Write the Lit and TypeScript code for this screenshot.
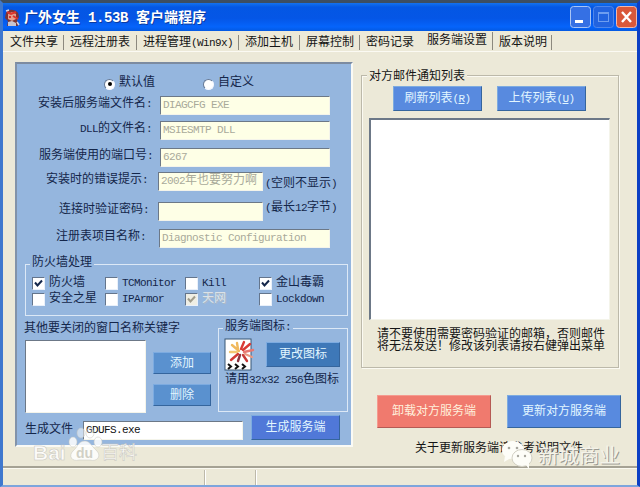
import { LitElement, html, css, svg } from "lit";
import { customElement } from "lit/decorators.js";
import { classMap } from "lit/directives/class-map.js";
import { styleMap } from "lit/directives/style-map.js";

/* Half-width characters take half the advance of a full-width one. */
const mixed = (s: string) =>
  s.split(/([\x20-\x7e]+)/).filter(Boolean).map((p) =>
    /^[\x20-\x7e]/.test(p) ? html`<span class="a">${p}</span>` : p);

const tabs = [
  { t: "文件共享", w: 60 },
  { t: "远程注册表", w: 73 },
  { t: "进程管理(Win9x)", w: 102 },
  { t: "添加主机", w: 61 },
  { t: "屏幕控制", w: 60 },
  { t: "密码记录", w: 61, quiet: true },
  { t: "服务端设置", w: 72, on: true },
  { t: "版本说明", w: 59 },
];

const rows = [
  { label: "安装后服务端文件名:", v: "DIAGCFG EXE", end: 135, gap: 11, w: 170, h: 25 },
  { label: "DLL的文件名:", v: "MSIESMTP DLL", end: 135, gap: 11, w: 170, h: 27 },
  { label: "服务端使用的端口号:", v: "6267", end: 136, gap: 10, w: 170, h: 24 },
  { label: "安装时的错误提示:", v: "2002年也要努力啊", end: 131, gap: 13, w: 105, hint: "(空则不显示)", hd: 3, h: 30 },
  { label: "连接时验证密码:", v: "", end: 132, gap: 12, w: 105, hint: "(最长12字节)", hd: -3, h: 27 },
  { label: "注册表项目名称:", v: "Diagnostic Configuration", end: 129, gap: 16, w: 171, h: 20 },
];

const checks = [
  { t: "防火墙", on: true }, { t: "TCMonitor" }, { t: "Kill" }, { t: "金山毒霸", on: true },
  { t: "安全之星" }, { t: "IPArmor" }, { t: "天网", on: true, off: true }, { t: "Lockdown" },
];

const burst = svg`
  <rect width="26" height="31" fill="#fff" stroke="#385674"/>
  <g stroke-width="2.4" stroke-linecap="round" fill="none">
    <path d="M14 12L7 6M13 10L12 4" stroke="#f0b95e"/>
    <path d="M16 10L19 3M18 11L25 5" stroke="#d93a35"/>
    <path d="M12 13L5 13" stroke="#f3c872"/>
    <path d="M19 13L28 11" stroke="#e87872"/>
    <path d="M13 15L6 21" stroke="#d03a34"/>
    <path d="M15 16L13 22" stroke="#8e3540"/>
    <path d="M18 16L22 22" stroke="#c83836"/>
    <path d="M20 15L27 18" stroke="#eb9a84"/>
  </g>
  <path d="M3 25l3 2.5-3 2.5M10 25l3 2.5-3 2.5M17 25l3 2.5-3 2.5" stroke="#111" stroke-width="2" fill="none"/>`;

@customElement("app-root")
export class AppRoot extends LitElement {
  static styles = css`
    :host { display: block; width: 640px; height: 487px; }
    * { box-sizing: border-box; }
    .win {
      position: relative; height: 487px; overflow: hidden; background: #ece9d8;
      border: solid; border-width: 3px 3px 2px 3px;
      border-color: #3d4e61 #0c3fc4 #7da5dc #3f78ce;
      font: 12px/14px "Liberation Mono", "Noto Sans CJK SC", sans-serif;
      color: #151515; white-space: nowrap; display: flex; flex-direction: column;
    }
    .a { font-family: "Liberation Mono", monospace; font-size: 11px; letter-spacing: -0.6px; white-space: pre; }
    .bar {
      height: 28px; margin: 0 -3px; padding: 0 3px 0 4px; display: flex; align-items: center; flex: none;
      background: linear-gradient(#1472ee 0, #0457e4 15%, #0556e6 55%, #0564fb 85%, #0359e2 100%);
      color: #fff; font-size: 14px; font-weight: 700;
    }
    .bar .a { font-size: 14px; letter-spacing: -0.4px; }
    .face { width: 16px; height: 17px; margin-right: 4px; }
    .name { flex: 1; text-shadow: 1px 1px #0b3ba0; line-height: 20px; padding-top: 1px; }
    .ctl { width: 21px; height: 22px; margin-left: 2px; }
    .tabs { display: flex; height: 21px; padding-left: 5px; flex: none; border-bottom: 1px solid #fbfaf3; }
    .tab { padding: 5px 0 0 2px; height: 21px; position: relative; }
    .tab::after { content: ""; position: absolute; right: 4px; top: 4px; width: 1px; height: 15px; background: #8c897e; }
    .tab.quiet::after { display: none; }
    .tab.on { padding-top: 3px; }
    .tab.on::after { top: 1px; height: 18px; }
    .body { display: flex; flex: 1; padding: 10px 0 0 12px; align-items: flex-start; }
    .left {
      width: 338px; height: 385px; background: #95b6de; color: #14264a; padding-left: 8px;
      border: solid; border-width: 2px; border-color: #7c8ba0 #fafaf5 #fafaf5 #8293a9;
    }
    .modes { display: flex; height: 32px; padding: 12px 0 0 78px; }
    .mode { display: flex; align-items: center; height: 14px; gap: 4px; width: 99px; }
    .dot {
      width: 11px; height: 11px; border-radius: 50%; background: #fff; margin: 2px 0 0 1px;
      border: 1px solid; border-color: #667995 #f5f8ff #f5f8ff #667995; display: grid; place-items: center;
    }
    .mode { padding-top: 0; }
    .dot.on::before { content: ""; width: 4px; height: 4px; border-radius: 50%; background: #000; }
    .row { display: flex; margin-left: -10px; }
    .label { text-align: right; padding-top: 1px; }
    .field, .list { background: #fff; border: 1px solid; border-color: #6c7887 #f4f4ea #f4f4ea #6c7887; }
    .field { height: 19px; line-height: 16px; padding-left: 2px; overflow: hidden; background: #feffe6; color: #a9aa9a; }
    .field.white { background: #fff; color: #111; }
    .hint { margin-left: 2px; padding-top: 2px; }
    .group { border: 1.5px solid #dce8f6; position: relative; }
    .cap { position: absolute; left: 4px; top: -9px; padding: 0 2px; background: #95b6de; }
    .fire { width: 323px; height: 52px; margin-top: 15px; padding: 10px 0 0 6px; display: grid;
      grid-template-columns: 73px 80px 74px 1fr; grid-auto-rows: 16px; }
    .check { display: flex; align-items: center; gap: 4px; }
    .box { width: 13px; height: 13px; background: #fff; border: 1px solid; border-color: #64758c #e9f0fa #e9f0fa #64758c; }
    .box svg { display: block; }
    .off { color: #dbe2e8; text-shadow: 1px 1px #aebac6; }
    .off .box { background: #efeee4; color: #a09c8c; }
    .lower { display: flex; margin-top: 5px; }
    .words { width: 193px; margin-left: -1px; padding-top: 1px; }
    .pair { display: flex; gap: 7px; margin: 4px 0 0 1px; }
    .list.small { width: 121px; height: 73px; }
    .stack { display: flex; flex-direction: column; gap: 10px; padding-top: 12px; }
    .btn {
      display: grid; place-items: center; color: #e2f6ff; background: #5a91cf;
      border: 1px solid; border-color: #7dabe0 #35659d #35659d #7dabe0; padding-top: 1px;
    }
    .btn.s { width: 58px; height: 22px; }
    .icons { width: 130px; height: 84px; margin: 7px 0 0 1px; padding: 10px 0 0 6px; }
    .iconrow { display: flex; height: 33px; gap: 11px; }
    .burst { width: 30px; height: 33px; overflow: visible; }
    .btn.change { width: 74px; height: 25px; background: #3e78b8; margin-top: 3px; }
    .use { display: block; margin-top: 1px; }
    .make { display: flex; margin-top: 3px; height: 25px; }
    .make .t { width: 58px; padding-top: 7px; }
    .make .field { width: 160px; margin: 5px 8px 0 0; }
    .btn.gen { width: 89px; height: 25px; background: #5078d8; margin-top: -1px; }
    .right { margin: 13px 0 0 8px; width: 260px; }
    .mail { width: 258px; height: 293px; border: 1px solid #bcb9aa; box-shadow: inset 1px 1px #fbfaf2, 1px 1px #fbfaf2; padding: 10px 0 0 7px; position: relative; }
    .mail .cap { background: #ece9d8; left: 5px; top: -6px; }
    .two { display: flex; gap: 15px; padding-left: 24px; }
    .btn.r { width: 89px; height: 25px; background: #588adf; }
    .btn .u { text-decoration: underline; }
    .list.big { width: 241px; height: 202px; margin-top: 7px; border-top-width: 2px; border-left-width: 2px; }
    .note { line-height: 12px; margin: 9px 0 0 8px; }
    .acts { display: flex; gap: 16px; margin: 27px 0 0 16px; }
    .btn.act { width: 114px; height: 33px; background: #588adf; }
    .btn.red { background: #f07a6e; border-color: #f59a8f #b55a54 #b55a54 #f59a8f; color: #fff0dc; }
    .about { margin: 14px 0 0 54px; }
    .status { display: flex; height: 19px; border-top: 2px solid #a5a294; flex: none; box-shadow: inset 0 1px #faf9f0; }
    .cell { border-right: 1px solid #bdb9aa; box-shadow: 1px 0 #fff; margin-top: 2px; }
    .c1 { width: 202px; } .c2 { width: 51px; }
    .baidu, .wechat { position: absolute; overflow: visible; }
    .baidu { left: 29px; top: 424px; }
    .wechat { left: 498px; top: 439px; }
  `;

  private check() {
    return html`<svg width="11" height="11" viewBox="0 0 11 11"><path d="M2 4.5L4.5 7.5L9 2.5" fill="none" stroke="currentColor" stroke-width="2"/></svg>`;
  }

  render() {
    return html`<div class="win">
      <div class="bar">
        <svg class="face" viewBox="0 0 16 17">
          <path d="M2 4Q4 0 9 1Q15 2 15 8L13 11L14 17H3L4 12L1 9Z" fill="#7b3534"/>
          <path d="M4 5L8 3L12 5L12 10L8 12L4 10Z" fill="#e5a08c"/>
          <path d="M3 3L7 5L12 3M9 7L14 10M5 8H7" stroke="#dc352b" stroke-width="2" fill="none"/>
          <path d="M4 13L8 12L12 14L12 17H4Z" fill="#c7c4cf"/><path d="M2 2L5 1M13 13L15 16" stroke="#d6d3df" stroke-width="1.5"/>
        </svg>
        <span class="name">${mixed("广外女生 1.53B 客户端程序")}</span>
        <svg class="ctl" viewBox="0 0 21 22"><rect x=".5" y=".5" width="20" height="21" rx="3" fill="#3570e4" stroke="#a9c5f5"/><rect x="5" y="14" width="8" height="3" fill="#fff"/></svg>
        <svg class="ctl" viewBox="0 0 21 22"><rect x=".5" y=".5" width="20" height="21" rx="3" fill="#2263df" stroke="#4f86ea"/><rect x="5.5" y="6.5" width="10" height="9" fill="none" stroke="#6d9df0"/><path d="M5 7H16" stroke="#6d9df0" stroke-width="2"/></svg>
        <svg class="ctl" viewBox="0 0 21 22"><rect x=".5" y=".5" width="20" height="21" rx="3" fill="#d9583a" stroke="#f0b9ae"/><path d="M6 6L15 16M15 6L6 16" stroke="#fff" stroke-width="2.4"/></svg>
      </div>
      <div class="tabs">${tabs.map((t) => html`<div class=${classMap({ tab: true, on: !!t.on, quiet: !!t.quiet })} style=${styleMap({ width: t.w + "px" })}>${mixed(t.t)}</div>`)}</div>
      <div class="body">
        <div class="left">
          <div class="modes">
            <div class="mode"><span class="dot on"></span>默认值</div>
            <div class="mode"><span class="dot"></span>自定义</div>
          </div>
          ${rows.map((r) => html`<div class="row" style=${styleMap({ height: r.h + "px" })}>
            <span class="label" style=${styleMap({ width: r.end + 2 + "px" })}>${mixed(r.label)}</span>
            <div class="field" style=${styleMap({ width: r.w + "px", marginLeft: r.gap - 3 + "px" })}>${mixed(r.v)}</div>
            ${r.hint ? html`<span class="hint" style=${styleMap({ marginTop: r.hd + "px" })}>${mixed(r.hint)}</span>` : ""}
          </div>`)}
          <div class="group fire"><span class="cap">防火墙处理</span>
            ${checks.map((c) => html`<div class=${classMap({ check: true, off: !!c.off })}><span class="box">${c.on ? this.check() : ""}</span><span>${mixed(c.t)}</span></div>`)}
          </div>
          <div class="lower">
            <div class="words">其他要关闭的窗口名称关键字
              <div class="pair"><div class="list small"></div>
                <div class="stack"><div class="btn s">添加</div><div class="btn s">删除</div></div></div>
            </div>
            <div class="group icons"><span class="cap">${mixed("服务端图标:")}</span>
              <div class="iconrow"><svg class="burst" viewBox="0 0 30 33">${burst}</svg><div class="btn change">更改图标</div></div>
              <span class="use">${mixed("请用32x32 256色图标")}</span>
            </div>
          </div>
          <div class="make"><span class="t">生成文件</span><div class="field white">${mixed("GDUFS.exe")}</div><div class="btn gen">生成服务端</div></div>
        </div>
        <div class="right">
          <div class="mail"><span class="cap">对方邮件通知列表</span>
            <div class="two">
              <div class="btn r"><span>刷新列表<span class="a">(<span class="u">R</span>)</span></span></div>
              <div class="btn r"><span>上传列表<span class="a">(<span class="u">U</span>)</span></span></div>
            </div>
            <div class="list big"></div>
            <div class="note">请不要使用需要密码验证的邮箱，否则邮件<br>将无法发送！修改该列表请按右健弹出菜单</div>
          </div>
          <div class="acts"><div class="btn act red">卸载对方服务端</div><div class="btn act">更新对方服务端</div></div>
          <div class="about">关于更新服务端请参考说明文件</div>
        </div>
      </div>
      <div class="status"><div class="cell c1"></div><div class="cell c2"></div></div>
      <svg class="baidu" width="110" height="36" viewBox="0 0 110 36" fill="#fff" fill-opacity=".85" stroke="#c5c4bd" stroke-width=".5">
        <text x="1" y="33" font-family="Liberation Sans, sans-serif" font-weight="700" font-size="21">Bai</text>
        <text x="69" y="32" font-family="Noto Sans CJK SC, sans-serif" font-size="18">百科</text>
        <ellipse cx="41" cy="15" rx="4" ry="5"/><ellipse cx="49" cy="6" rx="4" ry="5" fill-opacity=".5"/><ellipse cx="58" cy="6" rx="4" ry="5" fill-opacity=".3"/><ellipse cx="66" cy="15" rx="4" ry="5"/>
        <path d="M53 14C58 14 60 20 65 24C70 30 64 35 58 33H47C40 35 36 29 41 24C46 20 46 14 53 14Z"/>
        <text x="44" y="31" font-family="Liberation Sans, sans-serif" font-weight="700" font-size="14" fill="#c9c8bc" stroke="none">du</text>
      </svg>
      <svg class="wechat" width="125" height="30" viewBox="0 0 125 30">
        <ellipse cx="12" cy="8" rx="11" ry="9" fill="#fdfdf8"/><path d="M4 14L3 20L10 16Z" fill="#fdfdf8"/>
        <ellipse cx="21" cy="16" rx="10" ry="8.5" fill="#fdfdf8" stroke="#d2d0c4"/><path d="M24 22L28 27L28 20Z" fill="#fdfdf8"/>
        <g fill="#a7a69e"><circle cx="8" cy="6" r="1.3"/><circle cx="16" cy="6" r="1.3"/><circle cx="17" cy="14" r="1.2"/><circle cx="24" cy="14" r="1.2"/></g>
        <g font-family="Noto Sans CJK SC, sans-serif" font-size="20.5"><text x="38" y="22" fill="#9b9a92">新城商业</text><text x="37" y="21" fill="#f4f3ea">新城商业</text></g>
      </svg>
    </div>`;
  }
}
